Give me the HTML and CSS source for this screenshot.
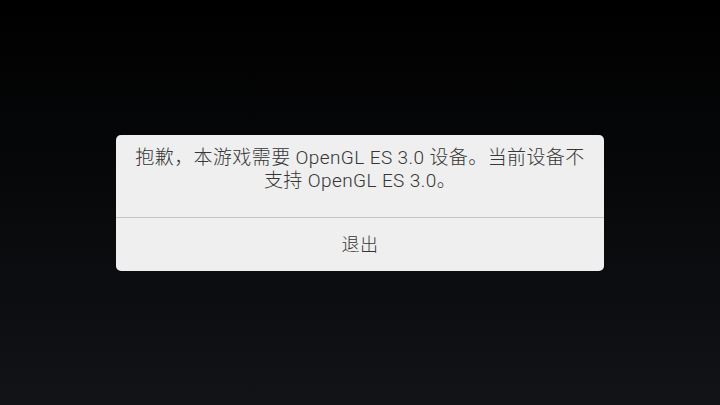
FILE: index.html
```html
<!DOCTYPE html>
<html lang="zh-CN">
<head>
<meta charset="utf-8">
<link rel="stylesheet" href="styles.css">
</head>
<body>
<div class="screen">
  <div class="dialog">
    <div class="message">抱歉，本游戏需要 OpenGL ES 3.0 设备。当前设备不<br>支持 OpenGL ES 3.0。</div>
    <div class="divider"></div>
    <div class="action">退出</div>
  </div>
</div>
</body>
</html>
```
FILE: styles.css
```css
html, body {
  margin: 0;
  padding: 0;
}
.screen {
  width: 720px;
  height: 405px;
  background: linear-gradient(180deg, #000000 0%, #07080a 45%, #111316 100%);
  display: flex;
  align-items: center;
  justify-content: center;
  font-family: Roboto, "Noto Sans CJK SC", sans-serif;
  font-weight: 300;
}
.dialog {
  width: 488px;
  background: #efefef;
  border-radius: 5px;
  display: flex;
  flex-direction: column;
}
.message {
  padding: 11px 6px 25px;
  text-align: center;
  font-size: 19px;
  line-height: 23px;
  letter-spacing: 0.4px;
  color: #363636;
}
.divider {
  height: 1px;
  background: #c6c6c6;
}
.action {
  height: 50px;
  padding-bottom: 3px;
  display: flex;
  align-items: center;
  justify-content: center;
  font-size: 18px;
  letter-spacing: 0.5px;
  color: #363636;
}
```
